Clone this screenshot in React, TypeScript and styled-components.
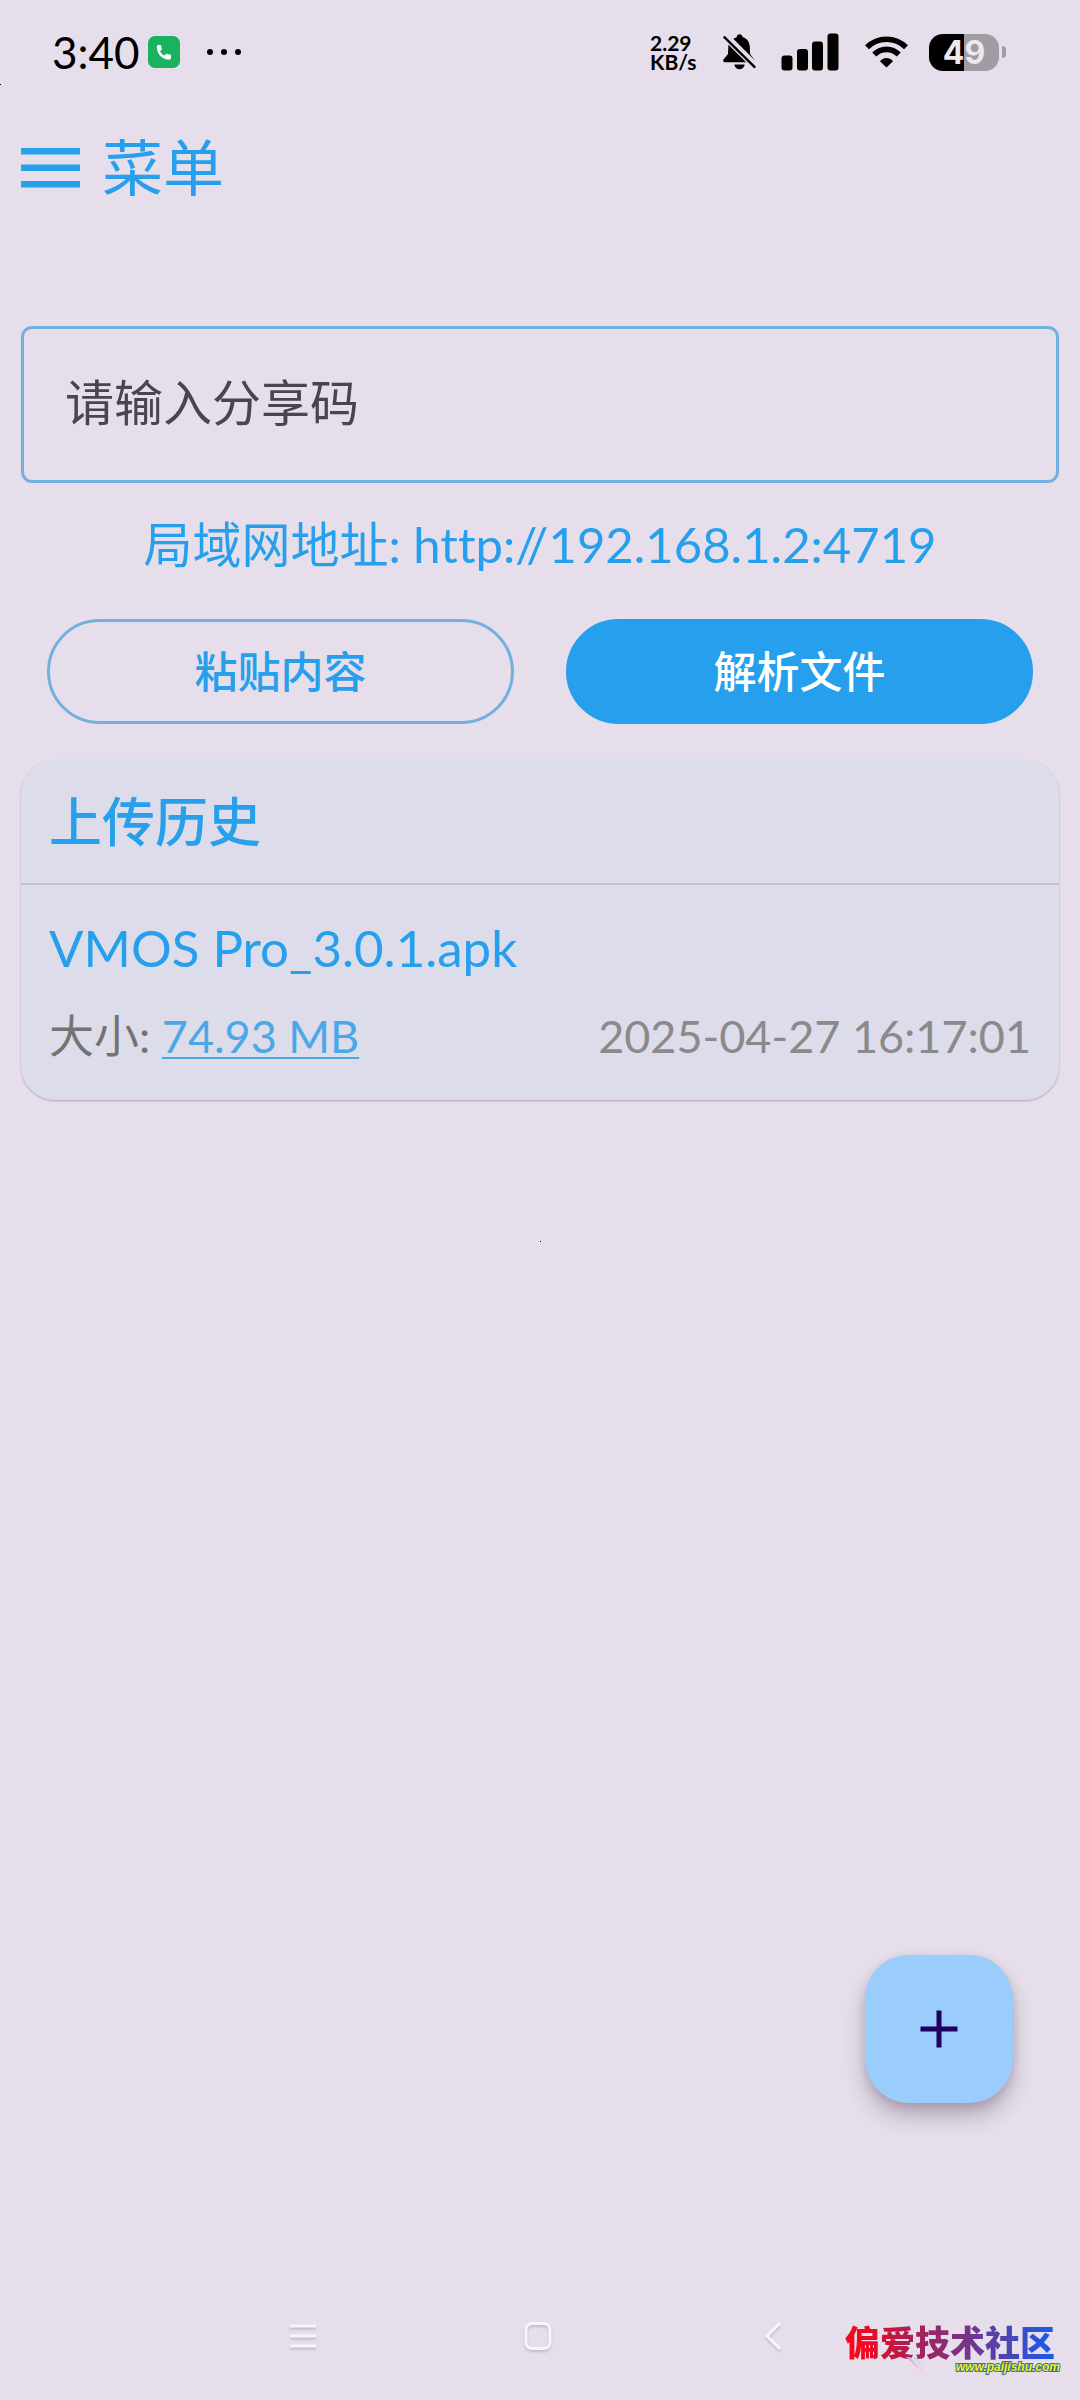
import React from 'react';
import styled, { createGlobalStyle, css } from 'styled-components';

const color = {
  page: '#e6deea',
  card: '#dddcea',
  primary: '#269fec',
  outline: '#72b0df',
  link: '#4ba8e6',
  text: '#49454f',
  label: '#737373',
  muted: '#8a8a8c',
  divider: '#c4c0d0',
  fab: '#9acdfc',
  onFab: '#20005f',
};

const GlobalStyle = createGlobalStyle`
  *, *::before, *::after { box-sizing: border-box; }
  body {
    margin: 0;
    background: ${color.page};
    font-family: Lato, "Noto Sans CJK SC", sans-serif;
    font-variant-ligatures: none;
  }
  svg { display: block; flex: none; }
`;

const Screen = styled.div`
  position: relative;
  display: flex;
  flex-direction: column;
  min-height: 100vh;
  background: ${color.page};
`;

/* ---------- status bar ---------- */

const StatusBar = styled.header`
  display: flex;
  align-items: center;
  justify-content: space-between;
  height: 104px;
  padding: 0 74px 0 52px;
  color: #000;
`;

const StatusLeft = styled.div`
  display: flex;
  align-items: center;
  gap: 8px;
`;

const StatusRight = styled.div`
  display: flex;
  align-items: center;
  gap: 21px;
`;

const Clock = styled.span`
  font-size: 44px;
  line-height: 46px;
`;

const Speed = styled.span`
  display: flex;
  flex-direction: column;
  width: 52px;
  font-size: 21px;
  font-weight: 700;
  line-height: 19px;
`;

const BatteryBox = styled.div`
  display: flex;
  align-items: center;
  gap: 3px;
`;

const BatteryBody = styled.span`
  width: 70px;
  height: 37px;
  border-radius: 14px;
  background: linear-gradient(90deg, #000 50%, #a09ca3 50%);
  color: #ece8ee;
  font-family: Inter, sans-serif;
  font-size: 32px;
  font-weight: 700;
  line-height: 37px;
  text-align: center;
`;

const BatteryTip = styled.span`
  width: 4px;
  height: 12px;
  border-radius: 0 5px 5px 0;
  background: #a09ca3;
`;

/* ---------- app content ---------- */

const Toolbar = styled.nav`
  padding: 20px 20px 0;
`;

const MenuButton = styled.button`
  display: flex;
  align-items: center;
  gap: 21px;
  height: 88px;
  padding: 0;
  border: 0;
  background: none;
  color: ${color.primary};
  font-family: inherit;
  font-size: 61px;
  line-height: 86px;
`;

const Content = styled.main`
  flex: 1;
  display: flex;
  flex-direction: column;
  padding: 114px 21px 0;
`;

const ShareInput = styled.input`
  width: 100%;
  height: 157px;
  padding: 0 41px 6px;
  border: 3px solid ${color.outline};
  border-radius: 11px;
  background: transparent;
  color: ${color.text};
  font-family: inherit;
  font-size: 49px;
  outline: none;
  &::placeholder {
    color: ${color.text};
    opacity: 1;
  }
`;

const Address = styled.p`
  margin: 25px 0 39px;
  color: ${color.primary};
  font-size: 49px;
  line-height: 72px;
  text-align: center;
`;

const Actions = styled.div`
  display: grid;
  grid-template-columns: 1fr 1fr;
  gap: 52px;
  padding: 0 26px;
`;

const PillButton = styled.button<{ $filled?: boolean }>`
  height: 105px;
  padding: 0 0 6px;
  border: 3px solid ${color.outline};
  border-radius: 53px;
  background: transparent;
  color: ${color.primary};
  font-family: inherit;
  font-size: 43px;
  font-weight: 500;
  ${({ $filled }) =>
    $filled &&
    css`
      border-color: ${color.primary};
      background: ${color.primary};
      color: #fff;
    `}
`;

const Card = styled.section`
  margin-top: 36px;
  border-radius: 34px;
  background: ${color.card};
  box-shadow: 0 1px 2px rgba(110, 100, 130, 0.45);
`;

const CardTitle = styled.h2`
  margin: 0;
  padding: 0 28px;
  height: 125px;
  border-bottom: 2px solid ${color.divider};
  color: ${color.primary};
  font-size: 53px;
  font-weight: 500;
  line-height: 123px;
`;

const HistoryItem = styled.article`
  padding: 25px 28px 28px;
`;

const FileName = styled.h3`
  margin: 0 0 14px;
  color: ${color.primary};
  font-size: 51px;
  font-weight: 400;
  line-height: 76px;
`;

const FileMeta = styled.div`
  display: flex;
  justify-content: space-between;
  font-size: 45px;
  line-height: 72px;
`;

const SizeLabel = styled.span`
  color: ${color.label};
`;

const SizeLink = styled.a`
  color: ${color.link};
  text-decoration: underline;
  text-decoration-thickness: 2px;
  text-underline-offset: 4px;
`;

const Timestamp = styled.time`
  color: ${color.muted};
`;

const Fab = styled.button`
  display: flex;
  align-items: center;
  justify-content: center;
  align-self: flex-end;
  width: 148px;
  height: 148px;
  margin: auto 46px 169px 0;
  padding: 0;
  border: 0;
  border-radius: 44px;
  background: ${color.fab};
  box-shadow: 0 14px 22px -2px rgba(60, 45, 70, 0.32), 0 3px 8px rgba(60, 45, 70, 0.14);
`;

/* ---------- system navigation ---------- */

const SystemNav = styled.footer`
  display: flex;
  justify-content: center;
  gap: 195px;
  height: 128px;
  padding-right: 4px;
`;

const NavButton = styled.button`
  display: flex;
  align-items: center;
  justify-content: center;
  width: 40px;
  padding: 0;
  border: 0;
  background: none;
  svg { filter: drop-shadow(0 2px 1px rgba(90, 70, 100, 0.25)); }
`;

/* ---------- overlays ---------- */

const Watermark = styled.div`
  position: absolute;
  right: 20px;
  bottom: 26px;
  display: flex;
  flex-direction: column;
  align-items: flex-end;
`;

const WatermarkName = styled.span`
  margin-right: 5px;
  background: linear-gradient(90deg, #f8061c 8%, #b51c4c 28%, #7b3285 56%, #4f44b0 76%, #1c59ea 96%);
  -webkit-background-clip: text;
  background-clip: text;
  color: transparent;
  font-family: "Noto Sans CJK SC", sans-serif;
  font-size: 35px;
  font-weight: 900;
  line-height: 38px;
`;

const WatermarkUrl = styled.span`
  color: #f2ee1d;
  font-family: "Liberation Sans", sans-serif;
  font-size: 12px;
  font-style: italic;
  font-weight: 700;
  line-height: 14px;
  -webkit-text-stroke: 2px #2f6f9c;
  paint-order: stroke fill;
`;

const Streak = styled.svg`
  position: absolute;
  left: 60px;
  bottom: -2px;
`;

const Speck = styled.i<{ $x: string; $y: number }>`
  position: absolute;
  left: ${({ $x }) => $x};
  top: ${({ $y }) => $y}px;
  width: 1px;
  height: 1px;
  background: #000;
`;

const CallIcon = () => (
  <svg width="32" height="32" viewBox="0 0 32 32">
    <rect width="32" height="32" rx="7" fill="#19b35f" />
    <path
      d="M9.3 9.100h3.600l1 4.300-1.900 1.900c1 2 2.300 3.300 4.300 4.200l2-1.800 4.700 1.200v3.700c-.3.900-1.500 1.200-3 1-6.300-.9-10.700-5.400-11.100-11.900 0-1.200 0-2 .4-2.600z"
      fill="#fff"
    />
  </svg>
);

const DotsIcon = () => (
  <svg width="60" height="8" viewBox="0 0 60 8">
    <circle cx="22" cy="4" r="3" />
    <circle cx="36" cy="4" r="3" />
    <circle cx="50" cy="4" r="3" />
  </svg>
);

const MutedBellIcon = () => (
  <svg width="37" height="36" viewBox="0 0 37 36">
    <path d="M13.500 3.500C14 1.500 14.800.3 16.500.3s2.700 1 3.100 2.600c4.600 1.600 7 5 7.200 9.800l.3 7.300 3.900 5.300c.6.900.4 2.900-.6 2.900H1.800c-1.600 0-2-1.700-1.200-2.900L5 20l.3-7.300c.2-4.500 3.800-8 8.200-9.200z" />
    <path d="M11.300 30.500h10.400c-.5 3-2.400 4.700-5.200 4.700s-4.700-1.700-5.200-4.700z" />
    <path d="M2.500.5l33 33" stroke={color.page} strokeWidth="5" />
    <path d="M.8 2.500l31.400 31.200" stroke={color.page} strokeWidth="5" />
    <path d="M.8 2.500l31.400 31.200" stroke="#000" strokeWidth="2.400" />
  </svg>
);

const SignalIcon = () => (
  <svg width="63" height="38" viewBox="0 0 63 38">
    <rect x="0.500" y="22.500" width="11" height="15" rx="3" />
    <rect x="16" y="16" width="11" height="21.500" rx="3" />
    <rect x="31" y="8.500" width="11" height="29" rx="3" />
    <rect x="46.500" y="0.500" width="11" height="37" rx="3" />
  </svg>
);

const WifiIcon = () => (
  <svg width="43" height="32" viewBox="0 0 43 32" fill="none" stroke="#000" strokeWidth="5.600">
    <path d="M2 11.300C13 .5 30 .5 41 11.300" />
    <path d="M9.200 18.600c7-7 17.600-7 24.600 0" />
    <path d="M15 25.300c3.700-4.300 9.300-4.300 13 0l-6.500 6.200z" fill="#000" stroke="none" />
  </svg>
);

const MenuIcon = () => (
  <svg width="61" height="40" viewBox="0 0 61 40" fill="currentColor">
    <rect x="1" y="0" width="59" height="6.500" />
    <rect x="1" y="16.500" width="59" height="6.500" />
    <rect x="1" y="33" width="59" height="6.500" />
  </svg>
);

const PlusIcon = () => (
  <svg width="38" height="38" viewBox="0 0 38 38" stroke={color.onFab} strokeWidth="5">
    <path d="M19 .5v37M.5 19h37" />
  </svg>
);

export default function App() {
  return (
    <Screen>
      <GlobalStyle />
      <StatusBar>
        <StatusLeft>
          <Clock>3:40</Clock>
          <CallIcon />
          <DotsIcon />
        </StatusLeft>
        <StatusRight>
          <Speed>
            <span>2.29</span>
            <span>KB/s</span>
          </Speed>
          <MutedBellIcon />
          <SignalIcon />
          <WifiIcon />
          <BatteryBox>
            <BatteryBody>49</BatteryBody>
            <BatteryTip />
          </BatteryBox>
        </StatusRight>
      </StatusBar>

      <Toolbar>
        <MenuButton type="button">
          <MenuIcon />
          菜单
        </MenuButton>
      </Toolbar>

      <Content>
        <ShareInput type="text" aria-label="请输入分享码" placeholder="请输入分享码" />
        <Address>局域网地址: http://192.168.1.2:4719</Address>
        <Actions>
          <PillButton type="button">粘贴内容</PillButton>
          <PillButton type="button" $filled>
            解析文件
          </PillButton>
        </Actions>

        <Card>
          <CardTitle>上传历史</CardTitle>
          <HistoryItem>
            <FileName>VMOS Pro_3.0.1.apk</FileName>
            <FileMeta>
              <SizeLabel>
                大小: <SizeLink href="#file">74.93 MB</SizeLink>
              </SizeLabel>
              <Timestamp dateTime="2025-04-27T16:17:01">2025-04-27 16:17:01</Timestamp>
            </FileMeta>
          </HistoryItem>
        </Card>

        <Fab type="button" aria-label="添加">
          <PlusIcon />
        </Fab>
      </Content>

      <SystemNav>
        <NavButton type="button" aria-label="最近任务">
          <svg width="28" height="28" viewBox="0 0 28 28" stroke="#f8f4fc" strokeWidth="3">
            <path d="M1 4h26M1 14h26M1 24h26" />
          </svg>
        </NavButton>
        <NavButton type="button" aria-label="主页">
          <svg width="28" height="28" viewBox="0 0 28 28" fill="none" stroke="#f8f4fc" strokeWidth="3">
            <rect x="2" y="1.500" width="24" height="25" rx="6" />
          </svg>
        </NavButton>
        <NavButton type="button" aria-label="返回">
          <svg width="28" height="28" viewBox="0 0 28 28" fill="none" stroke="#f8f4fc" strokeWidth="3">
            <path d="M21 1L8 14l13 13" />
          </svg>
        </NavButton>
      </SystemNav>

      <Watermark>
        <WatermarkName>偏爱技术社区</WatermarkName>
        <WatermarkUrl>www.paijishu.com</WatermarkUrl>
        <Streak width="22" height="20" viewBox="0 0 22 20">
          <path d="M1 1l15 14-11-14z" fill="#e9a6e6" />
          <path d="M7 1l11 10-7-10z" fill="#b5dff2" />
          <path d="M12 10l6 9v-8z" fill="#f3d3cf" />
        </Streak>
      </Watermark>

      <Speck $x="0" $y={84} />
      <Speck $x="50%" $y={1241} />
    </Screen>
  );
}
